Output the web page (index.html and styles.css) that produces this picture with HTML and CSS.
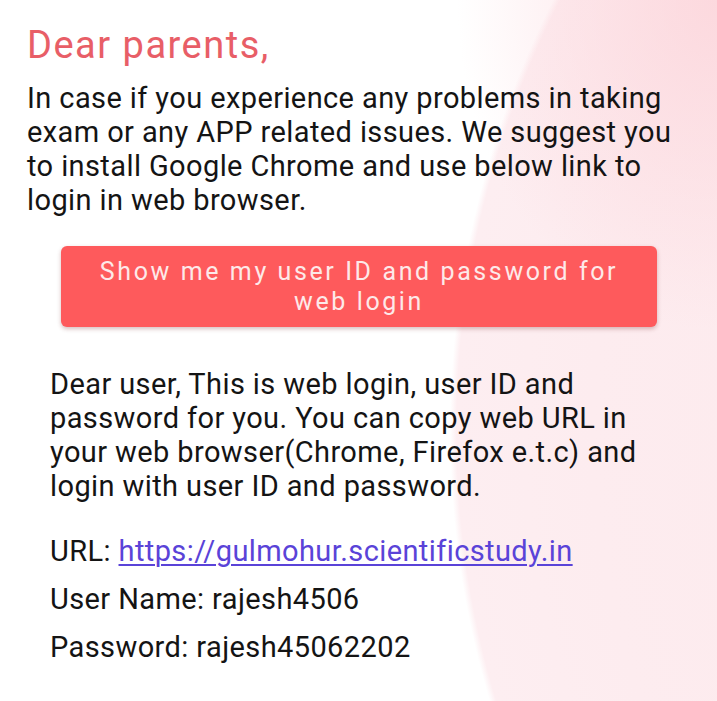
FILE: index.html
```html
<!DOCTYPE html>
<html lang="en">
<head>
<meta charset="utf-8">
<title>Web login</title>
<link rel="stylesheet" href="styles.css">
</head>
<body>
<main class="page">
  <h1 class="greeting">Dear parents,</h1>
  <p class="intro">In case if you experience any problems in taking exam or any APP related issues. We suggest you to install Google Chrome and use below link to login in web browser.</p>
  <button class="reveal" type="button">Show me my user ID and password for web login</button>
  <section class="credentials">
    <p class="note">Dear user, This is web login, user ID and password for you. You can copy web URL in your web browser(Chrome, Firefox e.t.c) and login with user ID and password.</p>
    <p class="row">URL: <a class="link" href="#">https://gulmohur.scientificstudy.in</a></p>
    <p class="row">User Name: rajesh4506</p>
    <p class="row">Password: rajesh45062202</p>
  </section>
</main>
</body>
</html>
```
FILE: styles.css
```css
html, body {
  margin: 0;
  height: 100%;
}
body {
  font-family: Roboto, "Noto Sans", sans-serif;
  color: #141414;
  background-color: #ffffff;
  background-image:
    radial-gradient(ellipse 260px 330px at 100% 0%, rgba(252, 212, 218, 0.8), rgba(252, 212, 218, 0) 100%),
    radial-gradient(circle 949px at 1399px 430px, #fce6e9 0%, #fdecef 85%, #fdeef1 99.3%, rgba(255, 255, 255, 0) 100%);
  background-repeat: no-repeat;
  overflow: hidden;
}
.page {
  padding: 24px 20px 0 27px;
  display: flex;
  flex-direction: column;
  align-items: flex-start;
}
.greeting {
  margin: 0;
  font-size: 38px;
  line-height: 42px;
  font-weight: 400;
  letter-spacing: 1.5px;
  color: #e85e67;
}
.intro {
  margin: 15px 0 0;
  font-size: 29px;
  line-height: 34px;
  letter-spacing: 0.4px;
  width: 665px;
}
.reveal {
  margin: 29px 0 0 34px;
  width: 596px;
  padding: 10.5px 20px;
  border: 0;
  border-radius: 6px;
  background: #fe5a5c;
  color: #fde9e9;
  font-family: Roboto, "Noto Sans", sans-serif;
  font-size: 25px;
  line-height: 30px;
  letter-spacing: 2.6px;
  box-shadow: 0 2px 4px rgba(120, 40, 40, 0.3);
  text-align: center;
}
.credentials {
  margin: 40px 0 0 23px;
  display: flex;
  flex-direction: column;
}
.note {
  margin: 0 0 24px;
  font-size: 29px;
  line-height: 34px;
  letter-spacing: 0.4px;
  width: 610px;
}
.row {
  margin: 0;
  font-size: 29px;
  line-height: 48px;
  letter-spacing: 0.4px;
}
.link {
  color: #5a43d8;
  text-decoration: underline;
  text-decoration-thickness: 2px;
  text-underline-offset: 3px;
}
```
